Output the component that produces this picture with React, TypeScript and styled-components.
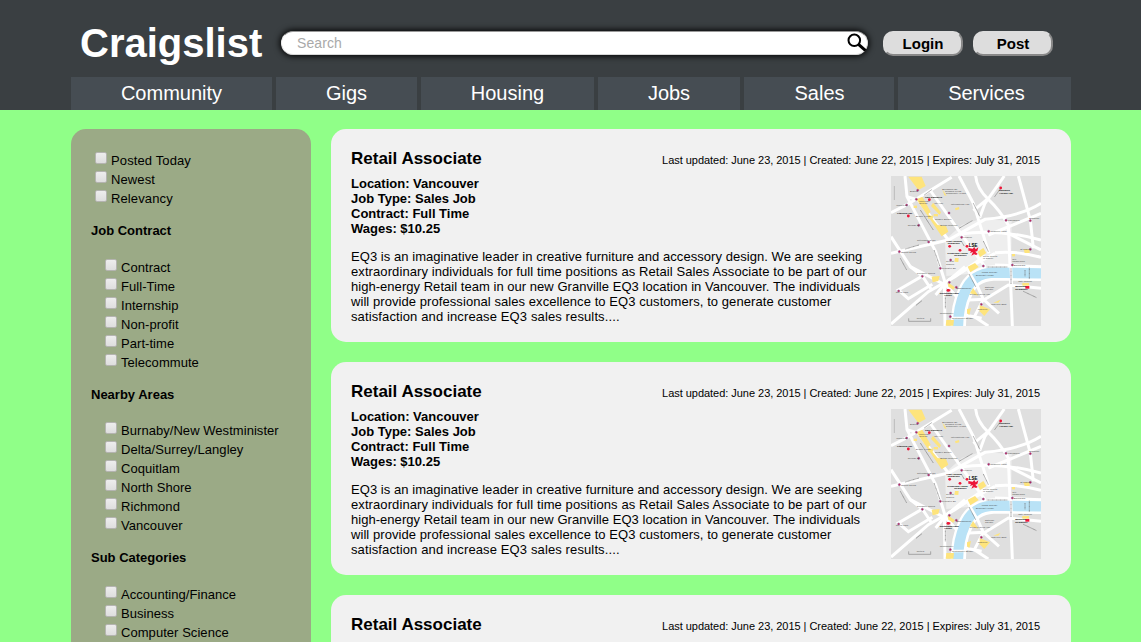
import React from "react";
import styled, { createGlobalStyle } from "styled-components";

const GlobalStyle = createGlobalStyle`
  * { box-sizing: border-box; }
  html, body { margin: 0; padding: 0; }
  body {
    height: 642px;
    overflow: hidden;
    background: #90ff88;
    color: #000;
    font-family: "Liberation Sans", Arial, sans-serif;
    font-size: 13px;
    line-height: 15px;
  }
`;

const Page = styled.div`
  height: 642px;
  overflow: hidden;
`;

const Header = styled.header`
  height: 110px;
  background: #3a3f42;
`;

const Container = styled.div`
  width: 1000px;
  margin-left: 71px;
`;

const TopBar = styled.div`
  display: flex;
  align-items: center;
  height: 77px;
  padding: 9px 0 0 9px;
`;

const Logo = styled.h1`
  width: 201px;
  margin: 0;
  color: #fff;
  font-size: 40px;
  line-height: 46px;
  font-weight: bold;
`;

const SearchBox = styled.div`
  display: flex;
  align-items: center;
  justify-content: space-between;
  width: 587px;
  height: 24px;
  margin-bottom: 1px;
  padding: 0 0 0 15px;
  border: 1px solid #d8d8d8;
  border-top-color: #999;
  border-left-color: #eee;
  border-radius: 12px;
  background: #fff;
  color: #a9a9a9;
  font-size: 14px;
  letter-spacing: 0.1px;
  box-shadow: 0 0 6px 1px #000;
`;

const Placeholder = styled.span`
  padding-top: 2px;
`;

const HeaderButton = styled.button`
  width: 80px;
  height: 25px;
  margin: 0 0 0 10px;
  padding: 0;
  border: 2px solid;
  border-color: #ddd #888 #888 #ddd;
  border-radius: 10px;
  background: #ddd;
  color: #000;
  font: bold 15px "Liberation Sans", Arial, sans-serif;
  &:first-of-type { margin-left: 15px; }
`;

const Nav = styled.nav`
  display: flex;
  gap: 4px;
  height: 33px;
`;

const NavItem = styled.a<{ $width: number; $shift?: number }>`
  width: ${(p) => p.$width}px;
  padding-left: ${(p) => p.$shift ?? 0}px;
  background: #464d53;
  color: #fff;
  font-size: 20px;
  line-height: 32px;
  text-align: center;
`;

const Main = styled(Container)`
  display: flex;
  align-items: flex-start;
  gap: 20px;
  padding-top: 19px;
`;

const Sidebar = styled.aside`
  width: 240px;
  height: 600px;
  padding: 22px 20px;
  border-radius: 15px;
  background: #9baa86;
`;

const FilterList = styled.div<{ $indent?: boolean }>`
  padding-left: ${(p) => (p.$indent ? 14 : 4)}px;
  letter-spacing: ${(p) => (p.$indent ? 0.05 : 0.12)}px;
`;

const FilterHeading = styled.h2<{ $gap: number }>`
  margin: 15px 0 ${(p) => p.$gap}px;
  font-size: 13px;
  line-height: 15px;
`;

const FilterRow = styled.label`
  display: flex;
  align-items: center;
  gap: 4px;
  height: 19px;
`;

const CheckBox = styled.span`
  width: 12px;
  height: 12px;
  margin-bottom: 5px;
  border: 1px solid #b4b4b0;
  border-radius: 2px;
  background: linear-gradient(#ededed, #dedede);
`;

const Results = styled.main`
  display: flex;
  flex-direction: column;
  gap: 20px;
  width: 740px;
`;

const Card = styled.article`
  height: 213px;
  padding: 20px 30px 0 20px;
  border-radius: 15px;
  background: #f1f1f1;
`;

const CardHeader = styled.div`
  display: flex;
  justify-content: space-between;
  height: 27px;
`;

const CardTitle = styled.h3`
  margin: 0;
  font-size: 17px;
  line-height: 19px;
`;

const CardDates = styled.span`
  margin-right: 1px;
  font-size: 11px;
  line-height: 22px;
  letter-spacing: -0.035px;
`;

const CardBody = styled.div`
  display: flex;
  justify-content: space-between;
`;

const CardText = styled.div`
  width: 520px;
  white-space: nowrap;
`;

const Facts = styled.div`
  margin-bottom: 13px;
  font-weight: bold;
`;

const Line = styled.span<{ $tracking: number }>`
  display: block;
  letter-spacing: ${(p) => p.$tracking}px;
`;

const MapArt = styled.svg`
  display: block;
  width: 150px;
  height: 150px;
`;

const roads = [
  "M60 18L66 80L152 245L178 330L180 468",
  "M18 128L66 104L200 22",
  "M66 80L100 90L190 210",
  "M135 60L240 208L300 290",
  "M222 18L265 100L312 250",
  "M272 18Q275 55 310 88T370 165L382 468",
  "M358 18L300 100L284 143",
  "M265 122L310 85",
  "M18 250L190 210L300 148Q410 138 468 100",
  "M400 18L436 150L445 235",
  "M225 192Q340 175 468 210",
  "M310 195L468 130",
  "M330 248Q400 242 468 262",
  "M370 190L468 240",
  "M18 200L76 290L112 318L40 360L70 386L142 343",
  "M76 290L130 318L190 350",
  "M18 462L130 365L210 320L300 258",
  "M190 330L265 285L330 250",
  "M112 318L140 360",
  "M152 375L178 342L240 290",
  "M178 340L215 380L206 468",
  "M260 310L295 388L342 430",
  "M250 390L300 388L370 345L468 355",
  "M295 388L268 440L310 468",
  "M240 435L290 445",
  "M330 285L468 290",
];

const parks = [
  "70,20 110,20 122,48 100,60",
  "94,88 112,80 137,125 130,132 158,165 183,168 190,185 170,199",
  "144,98 168,127 164,135 138,108",
  "172,58 185,78 178,76",
  "210,115 222,111 223,118 212,121",
  "278,245 295,234 304,249 285,261",
  "248,290 270,279 281,291 256,307",
  "140,320 164,318 160,333 143,337",
  "188,337 210,352 205,359 190,350",
  "210,264 221,264 220,276 208,275",
  "416,238 434,238 434,249 419,249",
  "412,339 432,339 432,347 412,347",
  "325,398 347,389 340,398",
  "284,405 315,418 298,438 284,424",
  "264,354 280,377 255,370",
  "184,450 207,450 205,467 182,467",
  "246,418 258,414 253,435 246,430",
];

const stations = [
  [98, 61], [94, 88], [65, 105], [101, 166], [131, 216], [192, 129], [230, 202], [311, 184],
  [363, 151], [436, 152], [43, 245], [112, 319], [41, 363], [166, 295], [193, 337], [214, 352],
  [197, 270], [295, 288], [289, 403], [196, 440], [382, 285], [436, 238],
];

const halls = [
  [133, 89], [70, 138], [347, 54], [194, 229], [225, 241], [246, 229], [189, 361],
];

const labels: [number, number, string, boolean?][] = [
  [75, 66, "Euston"],
  [120, 83, "Carr-Saunders", true],
  [36, 131, "Fitzrovia Hall", true],
  [34, 107, "Warren St"],
  [68, 169, "Goodge St"],
  [96, 213, "Tottenham Ct Rd"],
  [48, 248, "Oxford Circus"],
  [172, 59, "Brunswick Sq"],
  [180, 66, "Coram's Fields"],
  [182, 73, "Community Health"],
  [148, 103, "Int'l Hall"],
  [198, 106, "International Hall"],
  [103, 95, "University"],
  [103, 102, "College"],
  [92, 140, "Senate House"],
  [150, 150, "Russell Square"],
  [166, 169, "British Museum"],
  [342, 64, "Rosebery", true],
  [342, 71, "Avenue Hall", true],
  [368, 153, "Farringdon"],
  [433, 147, "Barbican"],
  [316, 186, "Chancery Lane"],
  [235, 205, "Holborn"],
  [184, 215, "High Holborn", true],
  [188, 222, "Residence", true],
  [187, 251, "Grosvenor House", true],
  [208, 258, "Residence", true],
  [183, 277, "Covent"],
  [183, 284, "Garden"],
  [294, 260, "Royal Courts"],
  [294, 267, "of Justice"],
  [290, 309, "King's College"],
  [272, 317, "Somerset House"],
  [171, 297, "Leicester Sq"],
  [96, 311, "Piccadilly Circus"],
  [32, 370, "Green Park"],
  [164, 371, "Northumberland", true],
  [178, 379, "House", true],
  [215, 357, "Embankment"],
  [164, 433, "Westminster"],
  [200, 447, "Westminster Bridge"],
  [254, 374, "Royal Festival Hall"],
  [300, 353, "National"],
  [300, 360, "Theatre"],
  [278, 419, "Waterloo"],
  [318, 406, "Waterloo East"],
  [386, 287, "Blackfriars"],
  [382, 269, "City"],
  [382, 276, "Thameslink"],
  [406, 240, "St Paul's"],
  [400, 336, "Tate Modern"],
  [391, 352, "Bankside", true],
  [391, 359, "Residence", true],
  [95, 447, "metres"],
];

const CityMap = () => (
  <MapArt viewBox="18 18 450 450" aria-hidden="true">
    <rect x="18" y="18" width="450" height="450" fill="#dfdfdf" />
    <path d="M180 210L230 165L284 148L380 152L378 300L184 318Z" fill="#eeeeee" />
    <g fill="none" stroke="#fff" strokeWidth="9">
      {roads.map((d) => <path key={d} d={d} />)}
    </g>
    <path
      d="M220 468Q220 410 240 368Q262 312 325 309L468 310"
      fill="none" stroke="#fff" strokeWidth="46"
    />
    <path
      d="M219 468Q220 410 239 368Q262 310 325 308L468 310"
      fill="none" stroke="#b9e2f6" strokeWidth="31"
    />
    <g stroke="#fff" strokeWidth="8">
      <path d="M377 280L380 345M249 300L278 350M200 444H244" />
    </g>
    <g fill="#fee47c">
      {parks.map((points) => <polygon key={points} points={points} />)}
      <rect x="129" y="137" width="15" height="9" />
      <rect x="146" y="132" width="13" height="7" />
      <rect x="381" y="252" width="9" height="7" />
      <rect x="86" y="107" width="10" height="7" />
    </g>
    <g fill="none" stroke="#666" strokeWidth="2" strokeDasharray="3 1">
      <path d="M106 120L145 180M265 100L285 140M295 213L310 245M46 265L65 300M147 240L165 290M181 380V415M252 312L272 350M378 295V343M433 293V327M420 300V320M222 175L262 152M329 80L347 55M415 364L455 383M118 75L140 59M93 406L111 392M61 237L102 225M230 215L238 229M305 291H367" />
    </g>
    <path d="M71 445V454H137V445" fill="none" stroke="#888" strokeWidth="2" />
    <path d="M28 90V48" stroke="#aaa" strokeWidth="3" strokeDasharray="2 1" />
    <g fill="#c52050" stroke="#8263a0" strokeWidth="1.5">
      {stations.map(([x, y]) => <circle key={`${x}-${y}`} cx={x} cy={y} r="3.2" />)}
    </g>
    <g fill="#ed1638">
      {halls.map(([x, y]) => <circle key={`${x}-${y}`} cx={x} cy={y} r="4.2" />)}
      <rect x="421" y="348" width="12" height="8" />
      <rect x="187" y="358" width="9" height="6" />
      <path d="M250 234L263 236L268 231L272 238L280 232L277 243L271 245L278 252L273 255L280 257L267 253L259 257L264 246L255 249L258 243L250 242Z" />
    </g>
    <g fontSize="7.4" fontFamily="Liberation Sans, sans-serif">
      {labels.map(([x, y, text, bold], i) => (
        <text key={i} x={x} y={y} fill={bold ? "#000" : "#444"} fontWeight={bold ? 700 : 400}>
          {text}
        </text>
      ))}
      <text x="251" y="230" fill="#000" fontSize="13.5" fontWeight="700">LSE</text>
    </g>
  </MapArt>
);

const SearchIcon = () => (
  <svg width="20" height="20" viewBox="0 0 20 20" fill="none" stroke="#000">
    <circle cx="7.3" cy="7.3" r="5.8" strokeWidth="2" />
    <path d="M11.5 11.3L18.6 17.7" strokeWidth="3" />
  </svg>
);

const navItems: [string, number, number?][] = [
  ["Community", 201], ["Gigs", 141], ["Housing", 173],
  ["Jobs", 142], ["Sales", 150, 1], ["Services", 173, 4],
];

const groups = [
  {
    title: "Job Contract", gap: 20,
    items: ["Contract", "Full-Time", "Internship", "Non-profit", "Part-time", "Telecommute"],
  },
  {
    title: "Nearby Areas", gap: 19,
    items: ["Burnaby/New Westminister", "Delta/Surrey/Langley", "Coquitlam", "North Shore", "Richmond", "Vancouver"],
  },
  {
    title: "Sub Categories", gap: 20,
    items: ["Accounting/Finance", "Business", "Computer Science"],
  },
];

const description: [string, number][] = [
  ["EQ3 is an imaginative leader in creative furniture and accessory design. We are seeking", 0.05],
  ["extraordinary individuals for full time positions as Retail Sales Associate to be part of our", 0.09],
  ["high-energy Retail team in our new Granville EQ3 location in Vancouver. The individuals", 0.035],
  ["will provide professional sales excellence to EQ3 customers, to generate customer", 0.07],
  ["satisfaction and increase EQ3 sales results....", 0.12],
];

const Filter = ({ label }: { label: string }) => (
  <FilterRow><CheckBox />{label}</FilterRow>
);

const JobCard = ({ collapsed }: { collapsed?: boolean }) => (
  <Card>
    <CardHeader>
      <CardTitle>Retail Associate</CardTitle>
      <CardDates>Last updated: June 23, 2015 | Created: June 22, 2015 | Expires: July 31, 2015</CardDates>
    </CardHeader>
    {!collapsed && (
      <CardBody>
        <CardText>
          <Facts>
            Location: Vancouver<br />
            Job Type: Sales Job<br />
            Contract: Full Time<br />
            Wages: $10.25
          </Facts>
          {description.map(([text, tracking]) => (
            <Line key={text} $tracking={tracking}>{text}</Line>
          ))}
        </CardText>
        <CityMap />
      </CardBody>
    )}
  </Card>
);

export default function App() {
  return (
    <Page>
      <GlobalStyle />
      <Header>
        <Container>
          <TopBar>
            <Logo>Craigslist</Logo>
            <SearchBox><Placeholder>Search</Placeholder><SearchIcon /></SearchBox>
            <HeaderButton>Login</HeaderButton>
            <HeaderButton>Post</HeaderButton>
          </TopBar>
          <Nav>
            {navItems.map(([label, width, shift]) => (
              <NavItem key={label} $width={width} $shift={shift}>{label}</NavItem>
            ))}
          </Nav>
        </Container>
      </Header>
      <Main>
        <Sidebar>
          <FilterList>
            {["Posted Today", "Newest", "Relevancy"].map((label) => <Filter key={label} label={label} />)}
          </FilterList>
          {groups.map((group) => (
            <React.Fragment key={group.title}>
              <FilterHeading $gap={group.gap}>{group.title}</FilterHeading>
              <FilterList $indent>
                {group.items.map((label) => <Filter key={label} label={label} />)}
              </FilterList>
            </React.Fragment>
          ))}
        </Sidebar>
        <Results>
          <JobCard />
          <JobCard />
          <JobCard collapsed />
        </Results>
      </Main>
    </Page>
  );
}
